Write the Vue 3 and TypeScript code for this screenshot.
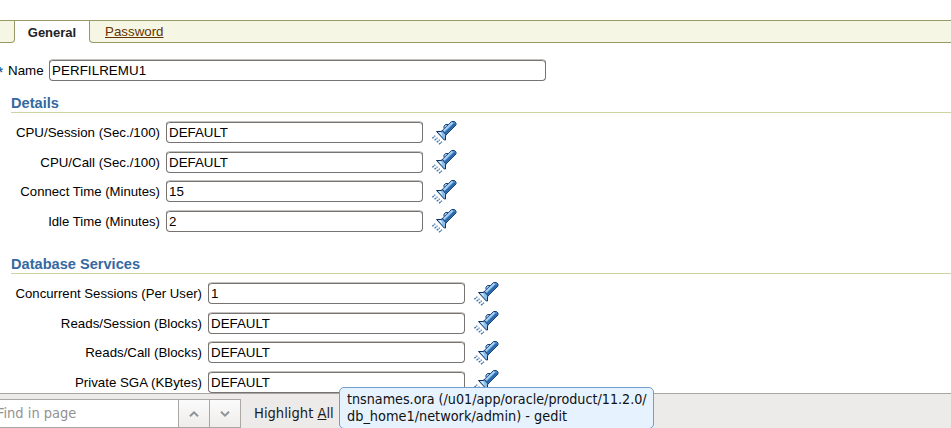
<script setup lang="ts">
interface Field { label: string; value: string; tight?: boolean }
interface Section { title: string; key: string; fields: Field[] }

const sections: Section[] = [
  {
    title: 'Details',
    key: 'details',
    fields: [
      { label: 'CPU/Session (Sec./100)', value: 'DEFAULT' },
      { label: 'CPU/Call (Sec./100)', value: 'DEFAULT' },
      { label: 'Connect Time (Minutes)', value: '15', tight: true },
      { label: 'Idle Time (Minutes)', value: '2', tight: true },
    ],
  },
  {
    title: 'Database Services',
    key: 'services',
    fields: [
      { label: 'Concurrent Sessions (Per User)', value: '1', tight: true },
      { label: 'Reads/Session (Blocks)', value: 'DEFAULT' },
      { label: 'Reads/Call (Blocks)', value: 'DEFAULT' },
      { label: 'Private SGA (KBytes)', value: 'DEFAULT' },
    ],
  },
]
</script>

<template>
  <div class="page">
    <nav class="tabs">
      <span class="tab-edge"></span>
      <span class="tab active">General</span>
      <span class="tab-rest"><a class="link">Password</a></span>
    </nav>

    <div class="name-row">
      <span class="star">*</span>
      <label class="name-label">Name</label>
      <div class="input wide">PERFILREMU1</div>
    </div>

    <section v-for="s in sections" :key="s.key" class="section" :class="s.key">
      <h2>{{ s.title }}</h2>
      <div class="rows">
        <div v-for="f in s.fields" :key="f.label" class="row">
          <label class="label" :class="{ tight: f.tight }">{{ f.label }}</label>
          <div class="input">{{ f.value }}</div>
          <svg class="torch" width="26" height="26" viewBox="0 0 26 26">
            <path d="M1.300 18.300l3-2.500M3.500 20.300l3-2.500M5.700 22.300l3-2.500M8 24.200l3-2.500" fill="none" stroke="#3f73ac" stroke-width="1.300" stroke-dasharray="2.200 .5" />
            <path d="M13 8.500v-2.300l1.500-1.700h2.500" fill="#a9cdee" stroke="#123f76" />
            <path d="M11 10.800L20.500 1.500h3l1.500 1.500v2L15 15z" fill="#4f8dcc" stroke="#164478" />
            <path d="M12.700 11l8.800-8.500" stroke="#a9d1f4" stroke-width="1.800" />
            <path d="M14.500 13.200l9.500-9.200" stroke="#2b67a8" stroke-width="2" />
            <path d="M5.500 11.500h4.500l1.500-.7 3.500 4-.5 1.200v4h-1.200z" fill="#8bbde9" stroke="#0c3265" />
            <path d="M7.500 12.200h2.500l1.500 4z" fill="#e3f3ff" />
          </svg>
        </div>
      </div>
    </section>

    <footer class="findbar">
      <div class="find-input">Find in page</div>
      <div class="find-btn">
        <svg width="12" height="8" viewBox="0 0 12 8"><path d="M2 6.300l4-4 4 4" /></svg>
      </div>
      <div class="find-btn">
        <svg width="12" height="8" viewBox="0 0 12 8"><path d="M2 1.700l4 4 4-4" /></svg>
      </div>
      <span class="highlight">Highlight <u>A</u>ll</span>
    </footer>

    <div class="tooltip">
      <div class="line">tnsnames.ora (/u01/app/oracle/product/11.2.0/</div>
      <div class="line second">db_home1/network/admin) - gedit</div>
    </div>
  </div>
</template>

<style>
body { margin: 0; background: #fff; overflow: hidden; }
</style>

<style scoped>
.page {
  position: relative;
  box-sizing: border-box;
  width: 951px;
  height: 428px;
  padding-top: 20px;
  overflow: hidden;
  background: #fff;
  color: #000;
  font: 13.33px/16px "Liberation Sans", Arial, sans-serif;
}
.tabs { display: flex; height: 23px; }
.tab-edge, .tab-rest {
  box-sizing: border-box;
  height: 23px;
  border: 1px solid #999966;
  background: #f5f6e4;
}
.tab-edge { width: 15px; border-left: 0; border-bottom-right-radius: 4px; }
.tab.active {
  box-sizing: border-box;
  width: 74px;
  height: 23px;
  border-top: 1px solid #999966;
  text-align: center;
  font-size: 13px;
  font-weight: bold;
  line-height: 23px;
  color: #222;
}
.tab-rest { flex: 1; padding-left: 15px; border-right: 0; border-bottom-left-radius: 4px; line-height: 21px; }
.link { color: #663300; text-decoration: underline; }
.name-row { display: flex; height: 22px; margin-top: 16px; }
.star { width: 8px; margin-left: -3px; margin-right: 3px; font-size: 15px; font-weight: bold; line-height: 26px; color: #336699; }
.name-label { width: 41px; line-height: 24px; }
.input {
  box-sizing: border-box;
  width: 257px;
  height: 22px;
  padding-left: 2px;
  border: 1px solid #777370;
  border-top-color: #c4c2c0;
  border-radius: 4px;
  box-shadow: inset 0 1px 0 #777370;
  line-height: 22px;
  background: #fff;
}
.input.wide { width: 497px; letter-spacing: .08px; }
.section { margin-left: 11px; }
.details { margin-top: 14px; }
.services { margin-top: 24px; }
h2 {
  box-sizing: border-box;
  height: 18px;
  margin: 0;
  border-bottom: 1px solid #cfd3a4;
  font-size: 14.6px;
  line-height: 17px;
  color: #36699f;
}
.rows { padding-top: 8px; }
.row { display: flex; height: 30px; }
.row:nth-child(even) { height: 29px; }
.row:last-child { height: 22px; }
.label { width: 149px; margin-right: 6px; text-align: right; font-size: 13.3px; line-height: 24px; white-space: nowrap; }
.label.tight { font-size: 13.17px; }
.services .label { width: 191px; }
.torch { flex: none; margin-left: 8px; margin-top: -1px; }
.row:nth-child(even) .torch { margin-top: -2px; }
.findbar {
  position: absolute;
  left: 0;
  right: 0;
  top: 393px;
  height: 35px;
  box-sizing: border-box;
  display: flex;
  padding-top: 5px;
  border-top: 1px solid #a8a6a3;
  background: #edebe9;
  font: 14.5px/27px "DejaVu Sans Condensed", "DejaVu Sans", sans-serif;
  color: #1a1a1a;
}
.find-input {
  box-sizing: border-box;
  width: 178px;
  height: 29px;
  border: 1px solid #aaa7a4;
  border-left: 0;
  border-right: 0;
  background: #fff;
  color: #929292;
  text-indent: -3px;
}
.find-btn {
  box-sizing: border-box;
  width: 31px;
  height: 29px;
  border: 1px solid #aaa7a4;
  border-right: 0;
  display: flex;
  align-items: center;
  justify-content: center;
  background: linear-gradient(#fbfbfb, #efedeb);
}
.find-btn + .find-btn { width: 32px; border-right: 1px solid #aaa7a4; }
.find-btn path { fill: none; stroke: #8d949a; stroke-width: 2; }
.highlight { margin-left: 13px; font-size: 14.6px; line-height: 28px; }
.tooltip {
  position: absolute;
  left: 339px;
  top: 387px;
  box-sizing: border-box;
  width: 315px;
  height: 42px;
  padding: 3px 0 0 7px;
  border: 1px solid #709cce;
  border-radius: 5px;
  background: #e6f3ff;
  white-space: nowrap;
  font: 14.2px/17px "DejaVu Sans Condensed", "DejaVu Sans", sans-serif;
  color: #111;
}
.line.second { font-size: 14.35px; }
</style>
